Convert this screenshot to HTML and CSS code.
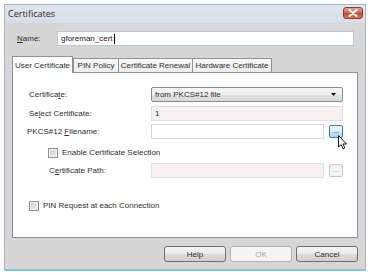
FILE: index.html
```html
<!DOCTYPE html>
<html>
<head>
<meta charset="utf-8">
<link rel="stylesheet" href="styles.css">
</head>
<body>
<div class="window">
  <div class="titlebar">
    <span class="title">Certificates</span>
    <span class="close"><svg width="10" height="8" viewBox="0 0 10 8"><path d="M1.5 1 L8.5 7 M8.5 1 L1.5 7" stroke="#fff" stroke-width="2" stroke-linecap="round"/></svg></span>
  </div>
  <div class="body">
    <div class="name-row">
      <span class="name-label"><u>N</u>ame:</span>
      <div class="textbox name-box">gforeman_cert<span class="caret"></span></div>
    </div>
    <div class="tabs">
      <div class="tab active t1">User Certificate</div>
      <div class="tab t2">PIN Policy</div>
      <div class="tab t3">Certificate Renewal</div>
      <div class="tab t4">Hardware Certificate</div>
    </div>
    <div class="panel">
      <div class="row r1">
        <span class="label">Certifica<u>t</u>e:</span>
        <div class="combo"><span>from PKCS#12 file</span><svg width="5" height="3" viewBox="0 0 5 3"><path d="M0 0 H5 L2.5 3 Z" fill="#111"/></svg></div>
      </div>
      <div class="row r2">
        <span class="label">Se<u>l</u>ect Certificate:</span>
        <div class="field ro full">1</div>
      </div>
      <div class="row r3">
        <span class="label lab-pk">PKCS#12 <u>F</u>ilename:</span>
        <div class="field short"></div>
        <div class="dots hover">...</div>
      </div>
      <div class="row r4">
        <span class="check"></span>
        <span class="ctext">Enable Certificate Selection</span>
      </div>
      <div class="row r5">
        <span class="label indent">C<u>e</u>rtificate Path:</span>
        <div class="field ro short"></div>
        <div class="dots disabled">...</div>
      </div>
      <div class="row r6">
        <span class="check pin"></span>
        <span class="ctext">PIN Request at each Connection</span>
      </div>
    </div>
    <div class="buttons">
      <div class="btn">Help</div>
      <div class="btn off">OK</div>
      <div class="btn">Cancel</div>
    </div>
  </div>
  <svg class="cursor" width="10" height="15" viewBox="0 0 10 15"><path d="M0.5 0.5 V12 L3.2 9.6 L5 13.8 L6.8 13 L5.1 9 H8.6 Z" fill="#fff" stroke="#000" stroke-width="0.9" stroke-linejoin="round"/></svg>
</div>
</body>
</html>
```

FILE: styles.css
```css
html, body {
  margin: 0;
  padding: 0;
  background: #ffffff;
}
body {
  font-family: "Liberation Sans", Arial, sans-serif;
  font-size: 8px;
  color: #2e2e2e;
}
u { text-decoration-thickness: 1px; text-underline-offset: 1px; }
.window {
  position: relative;
  margin: 4px 0 0 4px;
  width: 360px;
  height: 264px;
  border: 1px solid #a7b6c6;
  border-bottom: 2px solid #84c6dd;
  background: #d6d6d6;
}
.titlebar {
  height: 18px;
  display: flex;
  align-items: center;
  justify-content: space-between;
  background: linear-gradient(#dfe6ee, #d6dee7);
}
.title {
  font-family: "Open Sans", "Noto Sans", sans-serif;
  font-size: 9px;
  color: #2a2a2a;
  margin-left: 3px;
  margin-top: -1px;
}
.close {
  width: 20px;
  height: 12px;
  margin-right: 2px;
  margin-top: -2px;
  border: 1px solid #8c3a33;
  border-radius: 3px;
  box-sizing: border-box;
  background: linear-gradient(#e3a293, #cf6552 50%, #c14a36 51%, #d5745e);
  display: flex;
  align-items: center;
  justify-content: center;
}
.body {
  display: flex;
  flex-direction: column;
}
.name-row {
  display: flex;
  align-items: center;
  margin-top: 8px;
  padding-left: 12px;
}
.name-label { width: 40px; }
.textbox {
  box-sizing: border-box;
  height: 15px;
  background: #fff;
  border: 1px solid #b8c7d6;
  display: flex;
  align-items: center;
  padding-left: 3px;
}
.name-box { width: 297px; color: #222; }
.caret {
  display: inline-block;
  width: 1px;
  height: 10px;
  background: #000;
  margin-left: 1px;
}
.tabs {
  display: flex;
  align-items: flex-end;
  margin-top: 10px;
  padding-left: 7px;
  height: 16px;
  position: relative;
  z-index: 1;
}
.tab {
  box-sizing: border-box;
  height: 14px;
  border: 1px solid #8e9298;
  border-bottom: none;
  background: linear-gradient(#f8f8f8, #ececec);
  display: flex;
  align-items: center;
  justify-content: center;
  margin-left: -1px;
}
.tab.active {
  height: 17px;
  margin-bottom: -1px;
  background: #fff;
  margin-left: 0;
  z-index: 2;
}
.t1 { width: 61px; }
.t2 { width: 46px; margin-left: 0; }
.t3 { width: 75px; }
.t4 { width: 80px; }
.panel {
  box-sizing: border-box;
  margin-left: 7px;
  width: 346px;
  height: 166px;
  background: #fff;
  border: 1px solid #8e9298;
  display: flex;
  flex-direction: column;
  padding-top: 14px;
}
.row {
  display: flex;
  align-items: center;
  height: 15px;
}
.label {
  width: 122px;
  margin-left: 16px;
}
.label.lab-pk { margin-left: 14px; width: 124px; }
.label.indent { margin-left: 36px; width: 102px; }
.r2 { margin-top: 4px; }
.r3 { margin-top: 3px; }
.r4 { margin-top: 6px; }
.r5 { margin-top: 3px; }
.r6 { margin-top: 20px; }
.combo {
  box-sizing: border-box;
  width: 192px;
  height: 15px;
  border: 1px solid #8a8c8f;
  border-radius: 2px;
  background: linear-gradient(#f6f6f6, #eeeeee 50%, #e3e3e3 51%, #d8d8d8);
  display: flex;
  align-items: center;
  justify-content: space-between;
  padding: 0 6px 0 3px;
}
.field {
  box-sizing: border-box;
  height: 15px;
  background: #fff;
  border: 1px solid #d4d7dd;
  display: flex;
  align-items: center;
  padding-left: 3px;
}
.field.ro {
  background: #f8f1f4;
  border-color: #e2dde0;
}
.full { width: 192px; }
.short { width: 173px; }
.dots {
  box-sizing: border-box;
  width: 14px;
  height: 13px;
  margin-left: 5px;
  border-radius: 2px;
  display: flex;
  align-items: center;
  justify-content: center;
  font-size: 7px;
  padding-bottom: 2px;
}
.dots.hover {
  border: 1px solid #3c7fb1;
  background: linear-gradient(#eaf6fd, #d9f0fc 50%, #bee6fd 51%, #a7d9f5);
  color: #222;
}
.dots.disabled {
  border: 1px solid #c4c6c8;
  background: #f4f4f4;
  color: #9a9a9a;
}
.check {
  box-sizing: border-box;
  width: 10px;
  height: 10px;
  border: 1px solid #8f8f8f;
  background: linear-gradient(135deg, #cbcbcb, #f2f2f2);
  box-shadow: inset 0 0 0 1px #f4f4f4;
  margin-left: 35px;
}
.check.pin { margin-left: 16px; }
.ctext { margin-left: 4px; }
.buttons {
  display: flex;
  justify-content: flex-end;
  gap: 4px;
  margin-top: 8px;
  padding-right: 7px;
}
.btn {
  box-sizing: border-box;
  width: 62px;
  height: 16px;
  border: 1px solid #707070;
  border-radius: 3px;
  background: linear-gradient(#f2f2f2, #ebebeb 50%, #dddddd 51%, #cfcfcf);
  display: flex;
  align-items: center;
  justify-content: center;
}
.btn.off {
  border-color: #adb2b5;
  background: #f4f4f4;
  color: #a3a3a3;
}
.cursor {
  position: absolute;
  left: 333px;
  top: 130px;
  z-index: 5;
}
```
